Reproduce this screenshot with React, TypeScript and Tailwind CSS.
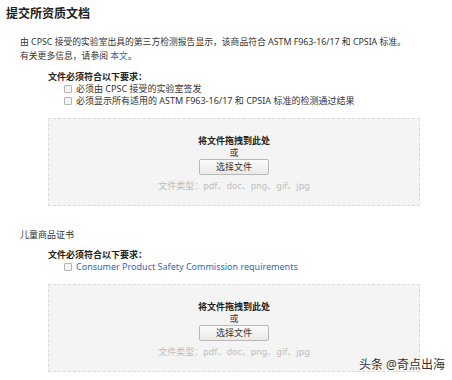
const font = { fontFamily: '"Noto Sans", "Noto Sans CJK SC", sans-serif' };

function Checkbox() {
  return <span className="inline-block w-[8px] h-[8px] border border-[#b5b5b5] bg-[#f2f2f2] rounded-[1px] mr-[4px] shrink-0" />;
}

function DropZone() {
  return (
    <div className="ml-[48px] w-[372px] h-[88px] border border-dashed border-[#dcdcdc] bg-[#f4f4f4] flex flex-col items-center pt-[16px]">
      <div className="text-[9px] leading-[12px] font-bold text-[#222]">将文件拖拽到此处</div>
      <div className="text-[9px] leading-[12px] text-[#333]">或</div>
      <button
        type="button"
        className="w-[70px] h-[16px] border border-[#b8b8b8] rounded-[2px] bg-gradient-to-b from-[#fbfbfb] to-[#e9e9e9] text-[9px] leading-[14px] text-[#333]"
      >
        选择文件
      </button>
      <div className="mt-[5px] text-[9px] leading-[12px] text-[#bdbdbd]">文件类型：pdf、doc、png、gif、jpg</div>
    </div>
  );
}

export default function App() {
  return (
    <div className="relative w-[452px] h-[380px] bg-white overflow-hidden text-[#333]" style={font}>
      <h1 className="pl-[6px] pt-[6px] text-[12px] leading-[16px] font-bold text-[#222]">提交所资质文档</h1>

      <p className="mt-[13px] ml-[20px] text-[8.8px] leading-[14px] whitespace-nowrap">
        由 CPSC 接受的实验室出具的第三方检测报告显示，该商品符合 ASTM F963-16/17 和 CPSIA 标准。
        <br />
        有关更多信息，请参阅 <span className="text-[#2d6db5]">本文</span>。
      </p>

      <div className="mt-[8px] ml-[48px] text-[9px] leading-[12px]">
        <div className="font-bold text-[#222]">文件必须符合以下要求：</div>
        <div className="ml-[16px] flex items-center">
          <Checkbox />
          <span>必须由 CPSC 接受的实验室签发</span>
        </div>
        <div className="ml-[16px] flex items-center">
          <Checkbox />
          <span>必须显示所有适用的 ASTM F963-16/17 和 CPSIA 标准的检测通过结果</span>
        </div>
      </div>

      <div className="mt-[11px]">
        <DropZone />
      </div>

      <div className="mt-[23px] ml-[20px] text-[9px] leading-[12px]">儿童商品证书</div>

      <div className="mt-[8px] ml-[48px] text-[9px] leading-[12px]">
        <div className="font-bold text-[#222]">文件必须符合以下要求：</div>
        <div className="ml-[16px] flex items-center">
          <Checkbox />
          <span className="text-[9px] text-[#2d6db5]">Consumer Product Safety Commission requirements</span>
        </div>
      </div>

      <div className="mt-[11px]">
        <DropZone />
      </div>

      <div className="absolute left-[359px] top-[356px] whitespace-nowrap text-[12px] leading-[18px] text-[#333] [text-shadow:0_0_2px_#fff]">
        头条 @奇点出海
      </div>
    </div>
  );
}
